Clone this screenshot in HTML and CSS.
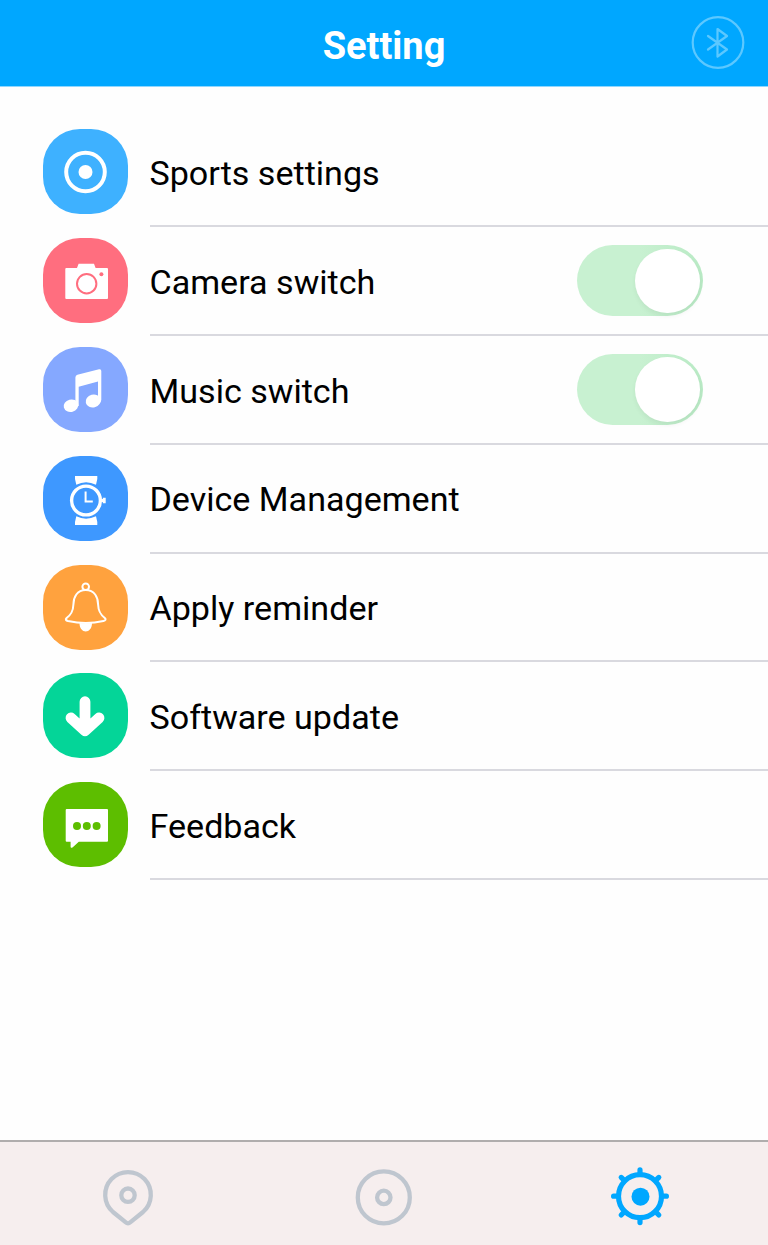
FILE: index.html
```
<!DOCTYPE html>
<html lang="en">
<head>
  <meta charset="UTF-8">
  <title>Setting</title>
  <link rel="stylesheet" href="styles.css">
</head>
<body>
  <div class="app">
    <header class="header">
      <h1>Setting</h1>
      <svg class="bluetooth" viewBox="0 0 54 54">
        <circle cx="27" cy="26.5" r="25.3"/>
        <path d="M17 20 L36 33.5 L26.5 40.5 V13 L36 20 L17 33.5"/>
      </svg>
    </header>

    <main class="list">
      <div class="row">
        <svg class="icon sports" viewBox="0 0 85 85">
          <circle cx="42.5" cy="43" r="19.3" fill="none" stroke="#fff" stroke-width="4"/>
          <circle cx="42.5" cy="43" r="7"/>
        </svg>
        <div class="item"><span>Sports settings</span></div>
      </div>

      <div class="row">
        <svg class="icon camera" viewBox="0 0 85 85">
          <path d="M23.3 30 H34 L35.6 25.7 H51 L52.6 30 H64 Q65 30 65 31 V60 Q65 61 64 61 H23.3 Q22.3 61 22.3 60 V31 Q22.3 30 23.3 30 Z"/>
          <circle cx="43.7" cy="45.7" r="9.7" fill="none" stroke="#ff6e7f" stroke-width="2"/>
          <circle cx="58.4" cy="36.2" r="2" fill="#ff6e7f"/>
        </svg>
        <div class="item"><span>Camera switch</span><div class="switch"></div></div>
      </div>

      <div class="row">
        <svg class="icon music" viewBox="0 0 85 85">
          <ellipse cx="28" cy="58.7" rx="7.4" ry="6.2" transform="rotate(-15 28 58.7)"/>
          <ellipse cx="50.2" cy="54" rx="7.6" ry="6.4" transform="rotate(-15 50.2 54)"/>
          <path d="M32.4 30.5 Q32.4 28.4 34.4 27.7 L56 22.3 Q58.3 21.8 58.3 24 V53 Q58 55 56.5 56 L55 54 V34.4 L35.7 39.7 V59 H32.4 Z"/>
        </svg>
        <div class="item"><span>Music switch</span><div class="switch"></div></div>
      </div>

      <div class="row">
        <svg class="icon device" viewBox="0 0 85 85">
          <path d="M32 20 H54.3 V23 L53 28.7 Q43 23.7 33.3 28.7 L32 23 Z"/>
          <path d="M33.3 60.3 Q43 65.2 53 60.3 L54.3 66 V69 H32 V66 Z"/>
          <circle cx="43" cy="44.5" r="14.4" fill="none" stroke="#fff" stroke-width="3.4"/>
          <path d="M58 42.9 H59.8 V41.7 H62.7 V47.3 H59.8 V46.1 H58 Z"/>
          <path d="M42.6 35.5 V45.5 H49.8" fill="none" stroke="#fff" stroke-width="2"/>
        </svg>
        <div class="item"><span>Device Management</span></div>
      </div>

      <div class="row">
        <svg class="icon reminder" viewBox="0 0 85 85">
          <g fill="none" stroke="#fff" stroke-width="2" stroke-linejoin="round">
            <circle cx="42.7" cy="21.7" r="3.3"/>
            <path d="M42.7 25.1 C34 25.1 30.5 32 30.4 39.5 C30.2 47 27.5 50 23.6 53 C22 54.5 23 55.5 25 56 Q43 60 60.4 56 C62.5 55.5 63.4 54.5 61.8 53 C58 50 55.3 47 55.1 39.5 C55 32 51.5 25.1 42.7 25.1 Z"/>
          </g>
          <path d="M36.5 58 Q42.7 58.8 49 58 C49 69.3 36.5 69.3 36.5 58 Z"/>
        </svg>
        <div class="item"><span>Apply reminder</span></div>
      </div>

      <div class="row">
        <svg class="icon update" viewBox="0 0 85 85">
          <path d="M42 28.7 V56 M28 45 L42 57.7 L56 45" fill="none" stroke="#fff" stroke-width="10.8" stroke-linecap="round" stroke-linejoin="round"/>
        </svg>
        <div class="item"><span>Software update</span></div>
      </div>

      <div class="row">
        <svg class="icon feedback" viewBox="0 0 85 85">
          <path d="M23.7 27 H64 Q65 27 65 28 V58.7 Q65 59.7 64 59.7 H35.8 L29.8 65.2 Q27.6 66.8 27.6 64.6 V59.7 H23.7 Q22.7 59.7 22.7 58.7 V28 Q22.7 27 23.7 27 Z"/>
          <g fill="#5dbe00">
            <circle cx="34" cy="44" r="4"/>
            <circle cx="43.8" cy="44" r="4"/>
            <circle cx="53.6" cy="44" r="4"/>
          </g>
        </svg>
        <div class="item"><span>Feedback</span></div>
      </div>
    </main>

    <nav class="tabs">
      <div class="tab">
        <svg viewBox="0 0 64 64">
          <path d="M32 59.3 Q30.8 59.3 29.5 58.2 L17 48 A22.8 22.8 0 1 1 47 48 L34.5 58.2 Q33.2 59.3 32 59.3 Z"/>
          <circle cx="32" cy="31.2" r="6.7"/>
        </svg>
      </div>
      <div class="tab">
        <svg viewBox="0 0 64 64">
          <circle cx="31.8" cy="33.4" r="26"/>
          <circle cx="31.8" cy="33.4" r="6.7"/>
        </svg>
      </div>
      <div class="tab active">
        <svg viewBox="0 0 64 64">
          <circle cx="32" cy="32.2" r="21.5"/>
          <path d="M32 10 V5.9 M32 54 V58.6 M10 32.2 H5.6 M54 32.2 H58.4 M16.5 16.7 L13.2 13.4 M47.5 16.7 L50.8 13.4 M16.5 47.7 L13.2 51 M47.5 47.7 L50.8 51"/>
          <circle class="dot" cx="32.5" cy="32.7" r="9"/>
        </svg>
      </div>
    </nav>
  </div>
</body>
</html>
```
FILE: styles.css
```
body {
  margin: 0;
  font-family: Roboto, "Liberation Sans", sans-serif;
  background: #fefefe;
  color: #000;
}

.app {
  display: flex;
  flex-direction: column;
  height: 1245px;
  overflow: hidden;
}

.header {
  display: grid;
  grid-template-columns: 1fr auto 1fr;
  align-items: center;
  height: 87px;
  padding: 0 23px;
  background: #00a7ff;
  border-bottom: 1px solid #8fd7ff;
  box-sizing: border-box;
  flex-shrink: 0;
}

.header h1 {
  grid-column: 2;
  margin: 5px 0 0;
  font-size: 38px;
  font-weight: 700;
  line-height: 44px;
  color: #fff;
}

.bluetooth {
  width: 54px;
  height: 54px;
  justify-self: end;
  fill: none;
  stroke: #5cc8ff;
  stroke-width: 2.2;
  stroke-linejoin: round;
  stroke-linecap: round;
}

.list {
  flex: 1;
  padding: 31.2px 0 0 43px;
}

.row {
  display: flex;
  gap: 21.5px;
  height: 108.83px;
}

.icon {
  width: 85px;
  height: 85px;
  margin-top: 11px;
  border-radius: 37px;
  fill: #fff;
  flex-shrink: 0;
}

.sports { background: #3eb1ff; }
.camera { background: #ff6e7f; }
.music { background: #85a8ff; }
.device { background: #3e98ff; }
.reminder { background: #ffa23e; }
.update { background: #04d598; }
.feedback { background: #5dbe00; }

.item {
  display: flex;
  flex: 1;
  align-items: center;
  justify-content: space-between;
  padding-right: 65px;
  border-bottom: 2px solid #d9d9df;
  font-size: 34.1px;
  line-height: 40px;
}

.item span {
  padding-top: 2.6px;
}

.switch {
  display: flex;
  justify-content: flex-end;
  width: 126.5px;
  height: 71px;
  margin-top: 18px;
  margin-bottom: 17px;
  padding: 3.2px;
  border-radius: 36px;
  background: linear-gradient(90deg, #c8f1d1 50%, #b9eac5);
  box-sizing: border-box;
}

.switch::after {
  content: "";
  width: 64.6px;
  height: 64.6px;
  border-radius: 50%;
  background: #fff;
  box-shadow: 0 3px 5px rgba(0, 0, 0, 0.05);
}

.tabs {
  display: flex;
  height: 105px;
  background: #f6eeee;
  border-top: 2px solid #b0adad;
  box-sizing: border-box;
}

.tab {
  display: flex;
  flex: 1;
  justify-content: center;
  padding-top: 22px;
}

.tab svg {
  width: 64px;
  height: 64px;
  fill: none;
  stroke: #bfc6cf;
  stroke-width: 4.3;
}

.tab.active svg {
  stroke: #00a7ff;
  stroke-width: 5.2;
  stroke-linecap: round;
}

.tab.active .dot {
  fill: #00a7ff;
  stroke: none;
}
```
